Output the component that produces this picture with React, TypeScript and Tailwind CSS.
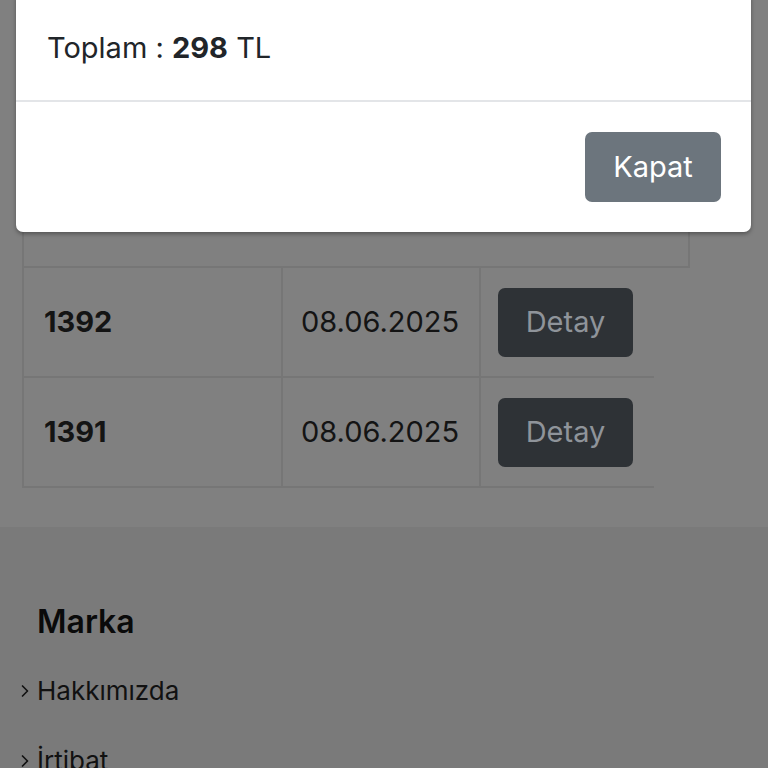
import { ChevronRight } from "lucide-react";

const orders = [
  { id: "1392", date: "08.06.2025" },
  { id: "1391", date: "08.06.2025" },
];

const links = ["Hakkımızda", "İrtibat", "Gizlilik"];

function OrderRow({ id, date }: { id: string; date: string }) {
  return (
    <div className="flex w-[630px] h-[110px] border-b-2 border-[#767676]">
      <div className="w-[259px] flex items-center pl-[20px] border-r-2 border-[#767676] font-bold text-[29px] text-[#141414]">
        {id}
      </div>
      <div className="w-[198px] flex items-center pl-[18px] border-r-2 border-[#767676] text-[29px] text-[#141414]">
        {date}
      </div>
      <div className="flex-1 flex items-center pl-[17px]">
        <button className="w-[135px] h-[69px] rounded-[7px] bg-[#2e3236] text-[#8f949a] text-[29px]">
          Detay
        </button>
      </div>
    </div>
  );
}

export default function App() {
  return (
    <div
      className="relative w-[768px] h-[768px] overflow-hidden bg-[#808080]"
      style={{ fontFamily: "Inter, 'Noto Sans', sans-serif" }}
    >
      {/* page under the modal */}
      <div className="pl-[22px] pt-[120px] pb-[39px]">
        <div className="w-[668px] h-[148px] border-x-2 border-b-2 border-[#767676] flex items-end">
          <div className="w-[259px] pl-[21px] pb-[34px] font-bold text-[29px]">Sipariş</div>
          <div className="w-[198px] pl-[20px] pb-[34px] font-bold text-[29px]">Tarih</div>
          <div className="flex-1 pl-[60px] pb-[34px] font-bold text-[29px]">Detay</div>
        </div>
        <div className="border-l-2 border-[#767676] w-[632px]">
          {orders.map((o) => (
            <OrderRow key={o.id} id={o.id} date={o.date} />
          ))}
        </div>
      </div>
      <footer className="bg-[#7a7a7a] pt-[79px] h-[300px]">
        <h2 className="pl-[37px] text-[32px] font-semibold text-[#0a0a0a] leading-none">Marka</h2>
        <ul className="mt-[31px] pl-[15px] flex flex-col gap-[26px]">
          {links.map((l) => (
            <li key={l} className="flex items-center gap-[2px] text-[26px] text-[#111] leading-[44px]">
              <ChevronRight size={20} strokeWidth={2} />
              {l}
            </li>
          ))}
        </ul>
      </footer>

      {/* modal */}
      <div className="absolute left-[16px] top-[-4px] w-[735px] bg-white rounded-b-[7px] shadow-[0_2px_4px_rgba(0,0,0,0.35)]">
        <div className="px-[31px] py-[30px] text-[29px] leading-[44px] text-[#212529]">
          Toplam : <span className="font-bold">298</span> TL
        </div>
        <div className="border-t-2 border-[#e3e5e8] flex justify-end px-[30px] pt-[30px] pb-[30px]">
          <button className="w-[136px] h-[70px] rounded-[7px] bg-[#6c757d] text-white text-[29px]">
            Kapat
          </button>
        </div>
      </div>
    </div>
  );
}
